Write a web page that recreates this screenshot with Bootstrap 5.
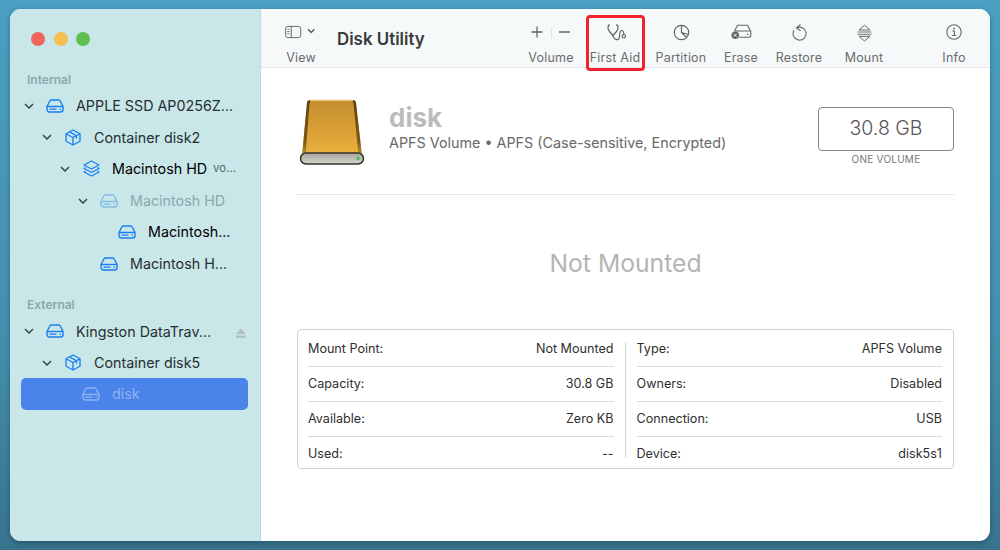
<!DOCTYPE html>
<html lang="en">
<head>
<meta charset="utf-8">
<title>Disk Utility</title>
<link href="https://cdn.jsdelivr.net/npm/bootstrap@5.3.0/dist/css/bootstrap.min.css" rel="stylesheet">
<style>
html,body{height:100%}
body{width:1000px;height:550px;overflow:hidden;font-family:Inter,"Liberation Sans",sans-serif;background:linear-gradient(180deg,#4b9fc2 0%,#4590ae 60%,#37738d 100%);padding:9px 10px}
.mac-win{width:980px;height:532px;border-radius:11px;overflow:hidden;background:#fff;box-shadow:0 2px 5px rgba(20,50,70,.45)}
.side{width:251px;background:#c9e6e8;border-right:1px solid #bcdcdc;flex:none;padding-top:23px}
.lights{gap:8.5px;padding-left:21px;margin-bottom:26px}
.lights i{display:block;width:14px;height:14px;border-radius:50%}
.sec{font-size:12px;font-weight:600;color:#8ea7aa;padding-left:17px;line-height:16px;margin-bottom:2px}
.sec-ext{margin-top:17px;margin-bottom:3px}
.trow{height:31.6px;font-size:14.3px;color:#262f31;white-space:nowrap}
.trow svg{flex:none}
.d0{padding-left:13px}.d1{padding-left:31px}.d2{padding-left:49px}.d3{padding-left:67px}.d4{padding-left:85px}
.chev{width:12px;flex:none;display:flex;justify-content:center}
.chev-none{width:12px;flex:none}
.ico{width:18px;margin-left:11px;margin-right:12px;flex:none;display:flex;justify-content:center}
.dim{color:#8aa9ad}.dim .ico svg{opacity:.4}
.tiny{font-size:11.5px;color:#56686b;margin-left:6px}
.sel-row{background:#4a84ea;border-radius:5px;margin:-1px 12px 0 11px;padding-left:50px;height:32px}
.eject{margin-left:auto;margin-right:14px}
.tb{height:59px;background:#f6f9f9;border-bottom:1px solid #e3e7e8;flex:none;padding-left:24px;padding-right:12px}
.titl{font-size:16.9px;font-weight:600;color:#3a3a3a;margin-left:20px;align-self:flex-start;margin-top:18px}
.tool{position:relative;height:59px;font-size:12.5px;color:#6c6c6c;padding-top:15px;flex:none;line-height:16px;letter-spacing:.2px;white-space:nowrap}
.tool .gly{height:23px;display:flex;justify-content:center;align-items:flex-start;margin-bottom:3px}
.w-view{width:32px}
.w-vol{width:64px}.w-aid{width:64px}.w-par{width:68px}.w-era{width:52px}.w-res{width:64px}.w-mou{width:66px}.w-inf{width:48px;margin-left:33px}
.w-aid .gly svg{margin-left:3px}
.redbox{position:absolute;left:3px;top:6px;width:59px;height:56px;border:3px solid #f0222c;border-radius:4px}
.hero{padding-top:31px;height:127px;border-bottom:1px solid #e6e6e6;margin:0 36px}
.hdd{margin-left:2px;margin-right:24px;flex:none}
.dname{font-size:26px;font-weight:700;color:#bcbcbc;line-height:30px;margin-top:4px}
.dsub{font-size:14.35px;color:#686868;line-height:20px;margin-top:0}
.sizebox{width:136px;height:44px;border:1.5px solid #858585;border-radius:4px;font-size:19.5px;font-weight:300;color:#555;margin-top:8px}
.sizecap{font-size:10px;color:#777;letter-spacing:.25px;margin-top:1px;line-height:14px}
.empty{height:134px;font-size:24.7px;color:#b4b4b4;padding-top:4px}
.info{margin:0 36px;height:140px;border:1px solid #cfcfcf;border-radius:4px;padding:2px 11px 0 10px;font-size:12.6px;color:#2f2f2f}
.icol{flex:1 1 0}
.irow{height:35px;border-bottom:1px solid #d8d8d8}
.irow:last-child{border-bottom:0;height:34px}
.vbar{width:1px;background:#d4d4d4;margin:10px 11px 10px 11px;flex:none}
</style>
</head>
<body>
<div class="mac-win d-flex">
  <aside class="side d-flex flex-column">
    <div class="lights d-flex">
      <i style="background:#f2655d"></i><i style="background:#f6bd4f"></i><i style="background:#5dbf4e"></i>
    </div>
    <div class="sec">Internal</div>

    <div class="trow d0 d-flex align-items-center">
      <span class="chev"><svg width="10" height="6" viewBox="0 0 10 6"><path d="M1 1l4 4 4-4" fill="none" stroke="#3b4648" stroke-width="1.5"/></svg></span>
      <span class="ico"><svg width="18" height="14" viewBox="0 0 18 14"><use href="#drv"/></svg></span>
      <span>APPLE SSD AP0256Z...</span>
    </div>
    <div class="trow d1 d-flex align-items-center">
      <span class="chev"><svg width="10" height="6" viewBox="0 0 10 6"><path d="M1 1l4 4 4-4" fill="none" stroke="#3b4648" stroke-width="1.5"/></svg></span>
      <span class="ico"><svg width="16" height="17" viewBox="0 0 16 17"><use href="#box"/></svg></span>
      <span>Container disk2</span>
    </div>
    <div class="trow d2 d-flex align-items-center">
      <span class="chev"><svg width="10" height="6" viewBox="0 0 10 6"><path d="M1 1l4 4 4-4" fill="none" stroke="#3b4648" stroke-width="1.5"/></svg></span>
      <span class="ico"><svg width="17" height="17" viewBox="0 0 17 17"><use href="#layers"/></svg></span>
      <span class="text-black">Macintosh HD</span><span class="tiny">vo...</span>
    </div>
    <div class="trow d3 d-flex align-items-center dim">
      <span class="chev"><svg width="10" height="6" viewBox="0 0 10 6"><path d="M1 1l4 4 4-4" fill="none" stroke="#3b4648" stroke-width="1.5"/></svg></span>
      <span class="ico"><svg width="18" height="14" viewBox="0 0 18 14"><use href="#drv"/></svg></span>
      <span>Macintosh HD</span>
    </div>
    <div class="trow d4 d-flex align-items-center">
      <span class="chev-none"></span>
      <span class="ico"><svg width="18" height="14" viewBox="0 0 18 14"><use href="#drv"/></svg></span>
      <span class="text-black">Macintosh...</span>
    </div>
    <div class="trow d3 d-flex align-items-center">
      <span class="chev-none"></span>
      <span class="ico"><svg width="18" height="14" viewBox="0 0 18 14"><use href="#drv"/></svg></span>
      <span>Macintosh H...</span>
    </div>

    <div class="sec sec-ext">External</div>
    <div class="trow d0 d-flex align-items-center">
      <span class="chev"><svg width="10" height="6" viewBox="0 0 10 6"><path d="M1 1l4 4 4-4" fill="none" stroke="#3b4648" stroke-width="1.5"/></svg></span>
      <span class="ico"><svg width="18" height="14" viewBox="0 0 18 14"><use href="#drv"/></svg></span>
      <span>Kingston DataTrav...</span>
      <span class="eject"><svg width="10" height="10" viewBox="0 0 10 10"><path d="M5 .5L10 6H0z" fill="#b3c0c0"/><rect y="7.5" width="10" height="2.4" fill="#b3c0c0"/></svg></span>
    </div>
    <div class="trow d1 d-flex align-items-center">
      <span class="chev"><svg width="10" height="6" viewBox="0 0 10 6"><path d="M1 1l4 4 4-4" fill="none" stroke="#3b4648" stroke-width="1.5"/></svg></span>
      <span class="ico"><svg width="16" height="17" viewBox="0 0 16 17"><use href="#box"/></svg></span>
      <span>Container disk5</span>
    </div>
    <div class="sel-row d-flex align-items-center trow" style="color:#8fb3f2">
      <span class="ico"><svg width="18" height="14" viewBox="0 0 18 14" style="color:#8fb3f2"><use href="#drvc"/></svg></span>
      <span>disk</span>
    </div>
  </aside>

  <main class="flex-grow-1 d-flex flex-column">
    <header class="tb d-flex align-items-start">
      <div class="tool w-view text-center">
        <div class="gly justify-content-start"><svg width="36" height="16" viewBox="0 0 36 16"><rect x=".7" y="1.700" width="17" height="12.600" rx="2.500" fill="none" stroke="#666" stroke-width="1.100"/><path d="M7 2v12" stroke="#666" stroke-width="1.100"/><path d="M2.500 5h2.500M2.500 7.500h2.500M2.500 10h2.500" stroke="#666"/><path d="M26 5l3.500 3.500L33 5" fill="none" stroke="#555" stroke-width="1.500"/></svg></div>
        <div>View</div>
      </div>
      <div class="titl">Disk Utility</div>
      <div class="ms-auto d-flex">
        <div class="tool w-vol text-center">
          <div class="gly"><svg width="50" height="16" viewBox="0 0 50 16"><path d="M5.500 8h11M11 2.500v11M33 8h11" fill="none" stroke="#666" stroke-width="1.300"/><path d="M25.500 3v11" stroke="#e3e6e6"/></svg></div>
          <div>Volume</div>
        </div>
        <div class="tool w-aid text-center">
          <div class="gly"><svg width="20" height="18" viewBox="0 0 20 18"><path d="M3 1.200H1.500C.6 3.500.8 5.500 2.500 7.500L6 11.500 9.500 7.500C11.200 5.500 11.400 3.500 10.500 1.200H9" fill="none" stroke="#666" stroke-width="1.200"/><path d="M6 11.500C7 16.500 12 17 12.500 13 12.800 10.500 12.300 6.500 14.700 6.500 16.800 6.500 16.800 9 16.800 10.500" fill="none" stroke="#666" stroke-width="1.200"/><circle cx="16.800" cy="12.300" r="1.700" fill="none" stroke="#666" stroke-width="1.100"/></svg></div>
          <div>First Aid</div>
          <div class="redbox"></div>
        </div>
        <div class="tool w-par text-center">
          <div class="gly"><svg width="17" height="17" viewBox="0 0 17 17"><circle cx="8.500" cy="8.500" r="7.200" fill="none" stroke="#666" stroke-width="1.200"/><path d="M8.500 1.500V8.500L15.300 10.500M8.500 8.500L13.500 13.500" fill="none" stroke="#666" stroke-width="1.200"/></svg></div>
          <div>Partition</div>
        </div>
        <div class="tool w-era text-center">
          <div class="gly"><svg width="21" height="16" viewBox="0 0 21 16"><path d="M3.500 7L6 2.300C6.300 1.700 7 1.300 7.700 1.300h7.600c.7 0 1.400.4 1.700 1L19.800 7.500v4c0 1-.7 1.700-1.700 1.700H8.500M3.500 7H19.800" fill="none" stroke="#666" stroke-width="1.100"/><circle cx="4.300" cy="11.300" r="3.800" fill="#666"/><path d="M2.900 9.900l2.800 2.800M5.700 9.900l-2.800 2.800" stroke="#fff" stroke-width=".9"/><circle cx="16.800" cy="10.200" r=".8" fill="#666"/></svg></div>
          <div>Erase</div>
        </div>
        <div class="tool w-res text-center">
          <div class="gly"><svg width="15" height="18" viewBox="0 0 15 18"><path d="M4.500 3.900A6.500 6.500 0 1 1 2 6.300" fill="none" stroke="#666" stroke-width="1.100"/><path d="M8.500.5L4.500 3.900l4 2.800" fill="none" stroke="#666" stroke-width="1.100"/></svg></div>
          <div>Restore</div>
        </div>
        <div class="tool w-mou text-center">
          <div class="gly"><svg width="15" height="18" viewBox="0 0 15 18"><path d="M7.500 1.200L13 6H2z" fill="none" stroke="#666" stroke-width="1"/><path d="M.5 8h14M.5 10.300h14" stroke="#666" stroke-width=".9"/><path d="M7.500 17L13 12.300H2z" fill="none" stroke="#666" stroke-width="1"/></svg></div>
          <div>Mount</div>
        </div>
        <div class="tool w-inf text-center">
          <div class="gly"><svg width="16" height="16" viewBox="0 0 16 16"><circle cx="8" cy="8" r="7.200" fill="none" stroke="#666" stroke-width="1.100"/><circle cx="8" cy="4.600" r=".95" fill="#666"/><path d="M6.300 7h2.100v4.500M6.200 11.500h4" fill="none" stroke="#666" stroke-width="1.100"/></svg></div>
          <div>Info</div>
        </div>
      </div>
    </header>

    <section class="hero d-flex align-items-start">
      <svg class="hdd" width="66" height="68" viewBox="0 0 66 68">
        <defs>
          <linearGradient id="gold" x1="0" y1="0" x2="0" y2="1"><stop offset="0" stop-color="#c48c2c"/><stop offset="1" stop-color="#ebb33e"/></linearGradient>
          <linearGradient id="bar" x1="0" y1="0" x2="0" y2="1"><stop offset="0" stop-color="#a5a59c"/><stop offset="1" stop-color="#d6d6d0"/></linearGradient>
          <linearGradient id="edge" x1="0" y1="0" x2="0" y2="1"><stop offset="0" stop-color="#5e400f"/><stop offset=".75" stop-color="#7e5a18"/><stop offset="1" stop-color="#c79a3a"/></linearGradient>
        </defs>
        <path d="M8 4C8.300 1.800 9.500 1 12 1H53C55.500 1 56.700 1.800 57 4L63 57H3Z" fill="url(#gold)"/>
        <path d="M8 4C8.300 1.800 9.500 1 12 1L10.500 4 6.500 57H3Z" fill="url(#edge)"/>
        <path d="M57 4C56.700 1.800 55.500 1 53 1L54.500 4 59.500 57H63Z" fill="url(#edge)"/>
        <path d="M11 1.500H54" stroke="#e6c274" stroke-width="1.500"/>
        <rect x="1.500" y="54" width="63" height="11" rx="5.500" fill="url(#bar)" stroke="#35352f" stroke-width="1.500"/>
        <circle cx="59" cy="59.500" r="1.800" fill="#4fc44a"/>
      </svg>
      <div class="flex-grow-1">
        <div class="dname">disk</div>
        <div class="dsub">APFS Volume • APFS (Case-sensitive, Encrypted)</div>
      </div>
      <div class="text-center">
        <div class="sizebox d-flex align-items-center justify-content-center">30.8 GB</div>
        <div class="sizecap">ONE VOLUME</div>
      </div>
    </section>

    <div class="empty d-flex align-items-center justify-content-center">Not Mounted</div>

    <section class="info d-flex">
      <div class="icol">
        <div class="irow d-flex justify-content-between align-items-center"><span>Mount Point:</span><span>Not Mounted</span></div>
        <div class="irow d-flex justify-content-between align-items-center"><span>Capacity:</span><span>30.8 GB</span></div>
        <div class="irow d-flex justify-content-between align-items-center"><span>Available:</span><span>Zero KB</span></div>
        <div class="irow d-flex justify-content-between align-items-center"><span>Used:</span><span>--</span></div>
      </div>
      <div class="vbar"></div>
      <div class="icol">
        <div class="irow d-flex justify-content-between align-items-center"><span>Type:</span><span>APFS Volume</span></div>
        <div class="irow d-flex justify-content-between align-items-center"><span>Owners:</span><span>Disabled</span></div>
        <div class="irow d-flex justify-content-between align-items-center"><span>Connection:</span><span>USB</span></div>
        <div class="irow d-flex justify-content-between align-items-center"><span>Device:</span><span>disk5s1</span></div>
      </div>
    </section>
  </main>
</div>
<svg width="0" height="0" class="position-absolute">
  <symbol id="drvc" viewBox="0 0 18 14"><path d="M1 7.500L3.800 2C4.200 1.300 4.900 1 5.600 1H12.400C13.100 1 13.800 1.300 14.200 2L17 7.500V10.500C17 12 16 13 14.500 13H3.500C2 13 1 12 1 10.500Z" fill="none" stroke="currentColor" stroke-width="1.400"/><path d="M1 7.500H17" stroke="currentColor" stroke-width="1.400"/><path d="M3.500 10.200h7M13.500 10.200h1.500" stroke="currentColor" stroke-width="1.300"/></symbol>
  <symbol id="drv" viewBox="0 0 18 14"><path d="M1 7.500L3.800 2C4.200 1.300 4.900 1 5.600 1H12.400C13.100 1 13.800 1.300 14.200 2L17 7.500V10.500C17 12 16 13 14.500 13H3.500C2 13 1 12 1 10.500Z" fill="none" stroke="#1a7ff0" stroke-width="1.400"/><path d="M1 7.500H17" stroke="#1a7ff0" stroke-width="1.400"/><path d="M3.500 10.200h7M13.500 10.200h1.500" stroke="#1a7ff0" stroke-width="1.300"/></symbol>
  <symbol id="box" viewBox="0 0 16 17"><path d="M8 1L15 4.800V12.300L8 16 1 12.300V4.800Z M1 4.800L8 8.500 15 4.800M8 8.500V16M4.500 2.900L11.500 6.700V9.500" fill="none" stroke="#1a7ff0" stroke-width="1.300" stroke-linejoin="round"/></symbol>
  <symbol id="layers" viewBox="0 0 17 17"><path d="M8.500 1L16 5 8.500 9 1 5Z M2.500 7.500L1 8.500 8.500 12.500 16 8.500 14.500 7.500 M2.500 11L1 12 8.500 16 16 12 14.500 11" fill="none" stroke="#1a7ff0" stroke-width="1.300" stroke-linejoin="round"/></symbol>
</svg>
<script src="https://cdn.jsdelivr.net/npm/bootstrap@5.3.0/dist/js/bootstrap.bundle.min.js"></script>
</body>
</html>
